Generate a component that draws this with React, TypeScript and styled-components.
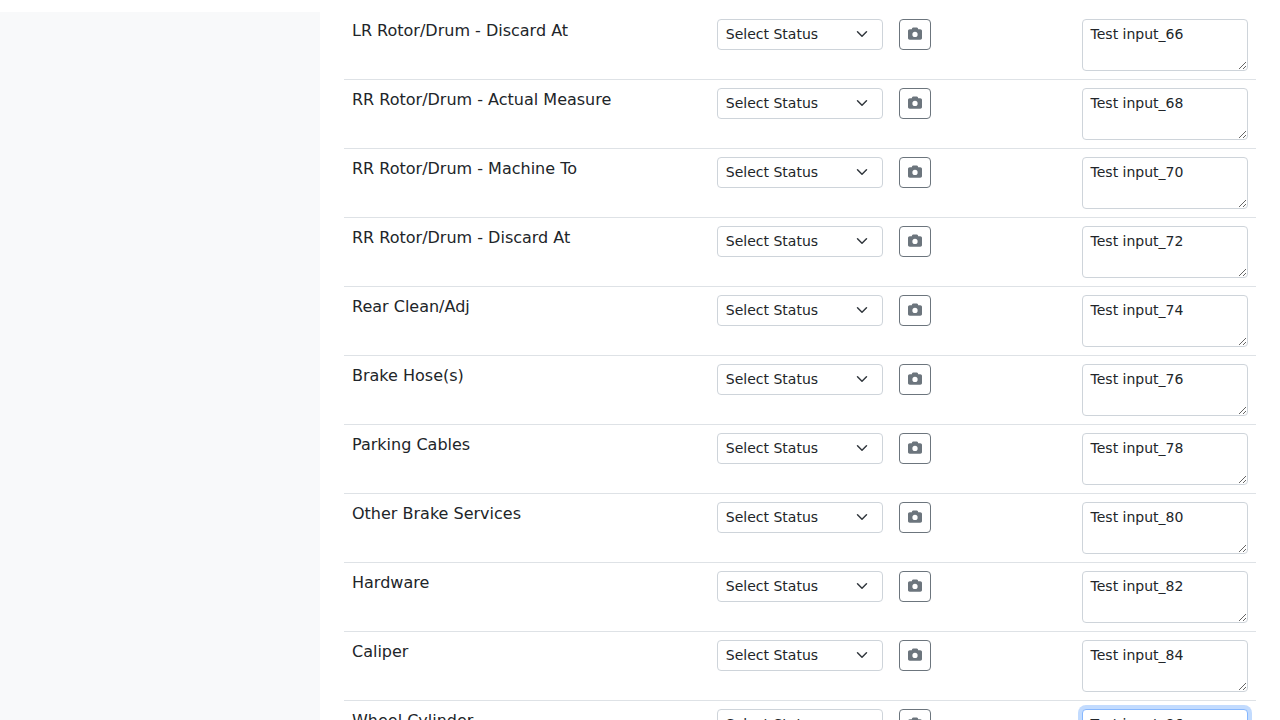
import React from "react";
import styled, { createGlobalStyle } from "styled-components";

const GlobalStyle = createGlobalStyle`
  *, *::before, *::after { box-sizing: border-box; }
  body {
    margin: 0;
    overflow: hidden;
    background: #fff;
    color: #212529;
    font-family: "DejaVu Sans", sans-serif;
    font-size: 16px;
    line-height: 1.5;
  }
`;

const Page = styled.div`
  display: flex;
  height: 720px;
  overflow: hidden;
`;

const Sidebar = styled.aside`
  flex: 0 0 320px;
  margin-top: 12px;
  background: #f8f9fa;
`;

const Main = styled.main`
  flex: 1;
  min-width: 0;
  padding: 10.6px 24px 0;
`;

const Table = styled.table`
  width: 100%;
  table-layout: fixed;
  border-collapse: separate;
  border-spacing: 0;
`;

const Cell = styled.td<{ $width: string }>`
  width: ${(p) => p.$width};
  height: 69px;
  padding: 8px;
  border-bottom: 1px solid #dee2e6;
  vertical-align: top;
`;

const StatusSelect = styled.select`
  display: block;
  width: 100%;
  height: 31px;
  margin: 0;
  padding: 4px 36px 4px 8px;
  border: 1px solid #ced4da;
  border-radius: 4px;
  appearance: none;
  color: #212529;
  background: #fff
    url("data:image/svg+xml,%3csvg xmlns='http://www.w3.org/2000/svg' viewBox='0 0 16 16'%3e%3cpath fill='none' stroke='%23343a40' stroke-linecap='round' stroke-linejoin='round' stroke-width='2' d='m2 5 6 6 6-6'/%3e%3c/svg%3e")
    no-repeat right 12px top 8px / 16px 12px;
  font-family: inherit;
  font-size: 14px;
  line-height: 1.5;
`;

const CameraButton = styled.button`
  display: inline-flex;
  align-items: flex-start;
  width: 32px;
  height: 31px;
  margin: 0;
  padding: 7px 8px 0;
  border: 1px solid #6c757d;
  border-radius: 4px;
  background: transparent;
  color: #6c757d;
  vertical-align: top;
`;

const CameraIcon = styled.svg`
  display: block;
  flex: none;
  width: 14px;
  height: 14px;
  fill: currentColor;
`;

const Notes = styled.textarea<{ $active: boolean }>`
  display: block;
  width: 100%;
  height: 52px;
  margin: 0;
  padding: 4px 8px;
  border: 1px solid ${(p) => (p.$active ? "#86b7fe" : "#ced4da")};
  border-radius: 4px;
  outline: 0;
  box-shadow: ${(p) => (p.$active ? "0 0 0 4px rgba(13, 110, 253, 0.25)" : "none")};
  background: #fff;
  color: #212529;
  font-family: inherit;
  font-size: 14px;
  line-height: 1.5;
  resize: vertical;
`;

const items = [
  { label: "LR Rotor/Drum - Discard At", note: "Test input_66" },
  { label: "RR Rotor/Drum - Actual Measure", note: "Test input_68" },
  { label: "RR Rotor/Drum - Machine To", note: "Test input_70" },
  { label: "RR Rotor/Drum - Discard At", note: "Test input_72" },
  { label: "Rear Clean/Adj", note: "Test input_74" },
  { label: "Brake Hose(s)", note: "Test input_76" },
  { label: "Parking Cables", note: "Test input_78" },
  { label: "Other Brake Services", note: "Test input_80" },
  { label: "Hardware", note: "Test input_82" },
  { label: "Caliper", note: "Test input_84" },
  { label: "Wheel Cylinder", note: "Test input_86", active: true },
];

export default function App() {
  return (
    <Page>
      <GlobalStyle />
      <Sidebar />
      <Main>
        <Table>
          <tbody>
            {items.map((item) => (
              <tr key={item.note}>
                <Cell $width="40%">{item.label}</Cell>
                <Cell $width="20%">
                  <StatusSelect>
                    <option>Select Status</option>
                  </StatusSelect>
                </Cell>
                <Cell $width="20%">
                  <CameraButton type="button" aria-label="Add photo">
                    <CameraIcon viewBox="0 16 512 512">
                      <path d="M149.1 64.8L138.7 96H64C28.7 96 0 124.7 0 160V416c0 35.3 28.7 64 64 64H448c35.3 0 64-28.7 64-64V160c0-35.3-28.7-64-64-64H373.3L362.9 64.8C356.4 45.2 338.1 32 317.4 32H194.6c-20.7 0-39 13.2-45.5 32.8zM256 192a96 96 0 1 1 0 192 96 96 0 1 1 0-192z" />
                    </CameraIcon>
                  </CameraButton>
                </Cell>
                <Cell $width="20%">
                  <Notes rows={2} defaultValue={item.note} $active={!!item.active} />
                </Cell>
              </tr>
            ))}
          </tbody>
        </Table>
      </Main>
    </Page>
  );
}
